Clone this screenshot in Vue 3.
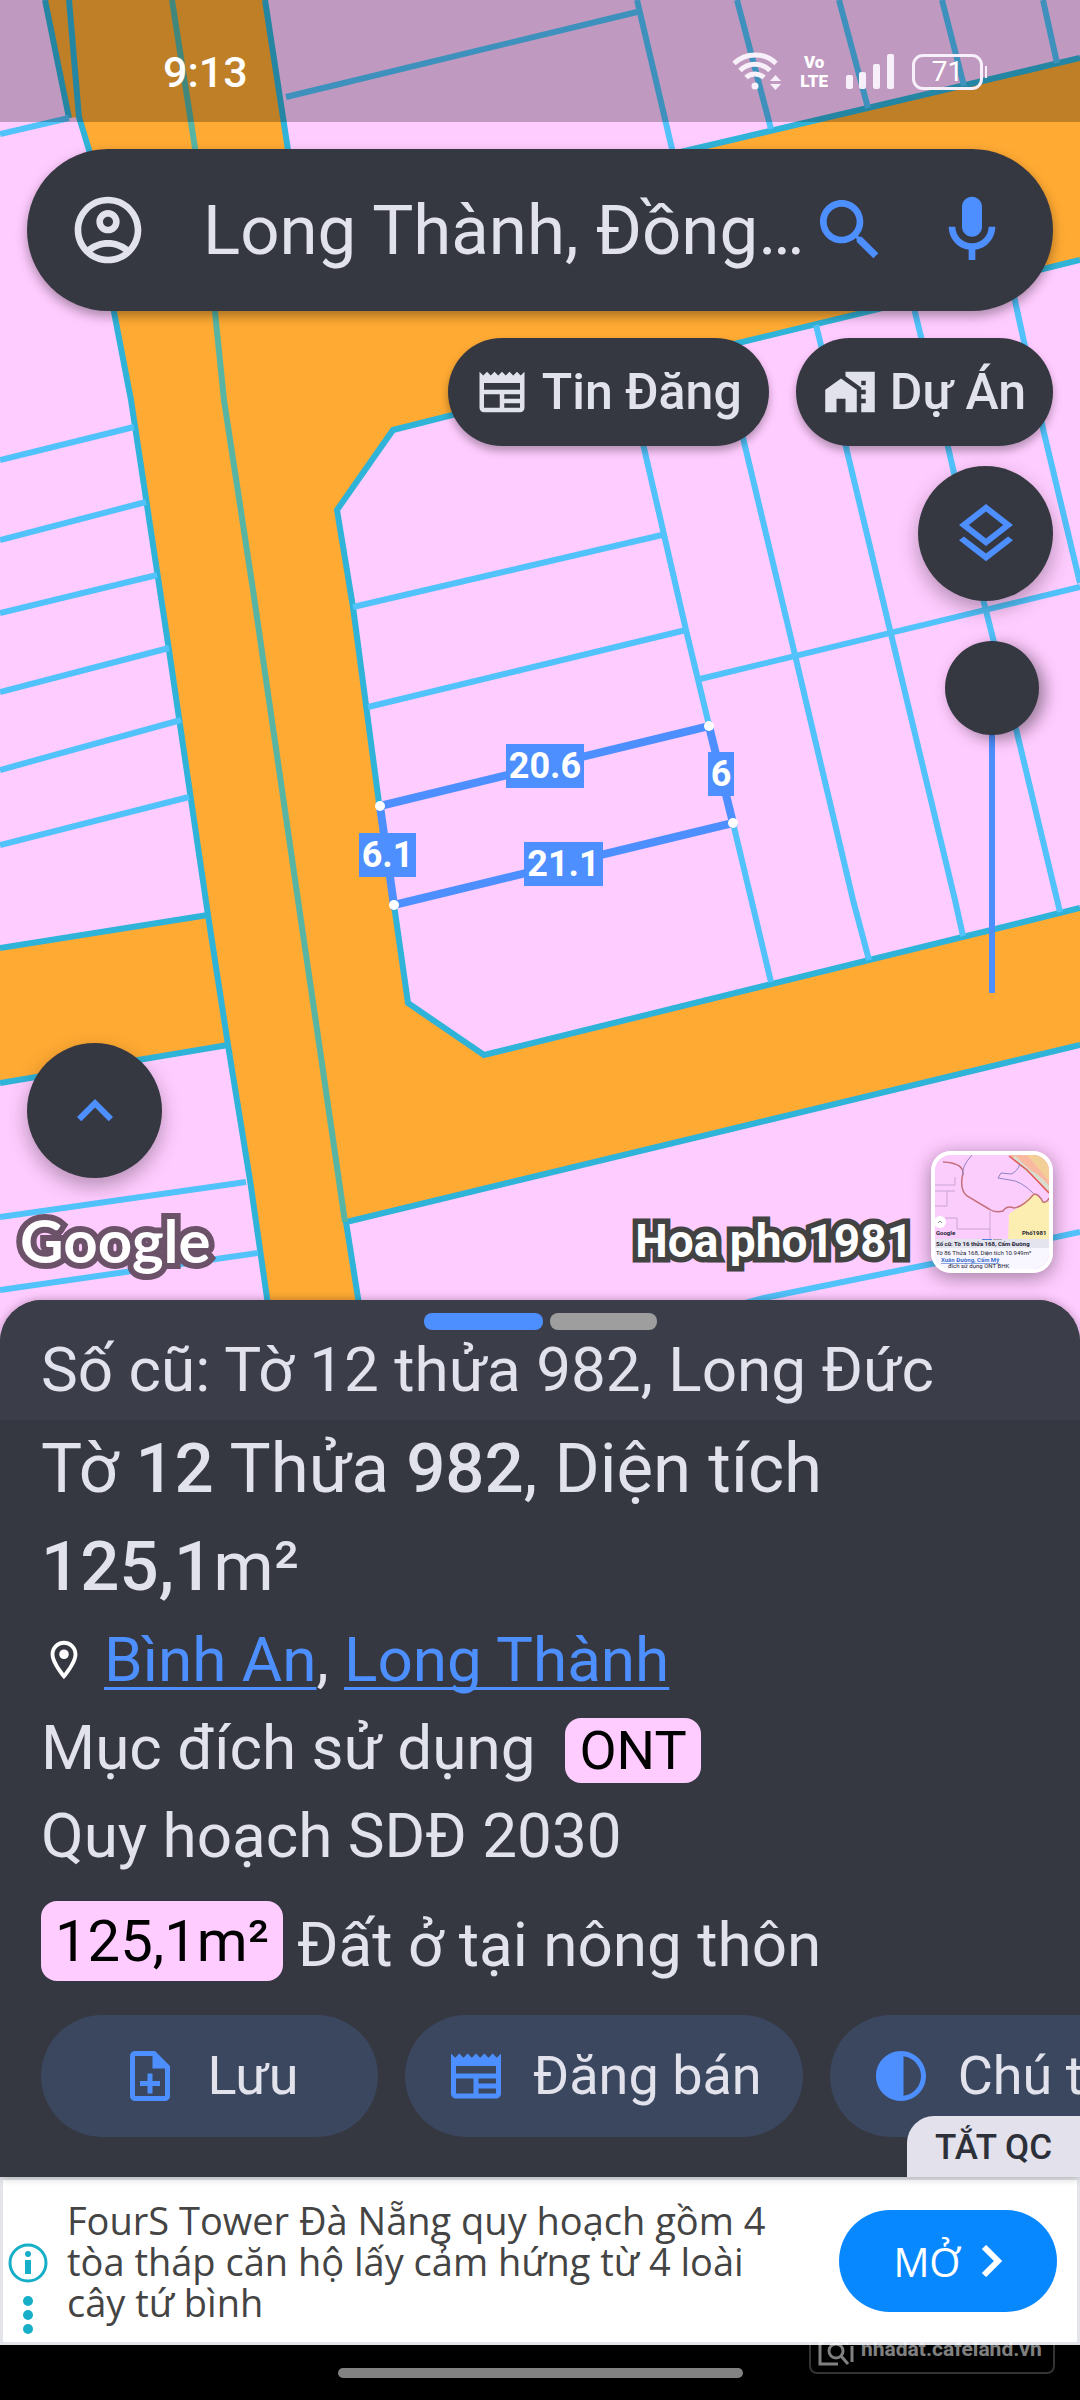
<template>
  <div class="app">
    <section class="map">
      <svg class="map-canvas" viewBox="0 0 1080 1345" preserveAspectRatio="xMidYMid slice" aria-hidden="true">
        <rect width="1080" height="1345" fill="#ffccff" />
        <path class="road" :d="road" />
        <g class="edge">
          <path v-for="d in edges" :key="d" :d="d" />
        </g>
        <g class="plot">
          <path v-for="d in plots" :key="d" :d="d" />
        </g>
        <path class="center-line" d="M172 0 195 148 215 312 224 400 253 590 298 900 320 1050 345 1222" />

        <path class="selected" d="M380 806 709 726 733 823 394 905Z" />
        <circle v-for="p in corners" :key="p[0]" :cx="p[0]" :cy="p[1]" r="5" fill="#fff" />
        <g v-for="m in measures" :key="m.text" class="measure">
          <rect :x="m.x" :y="m.y" :width="m.w" height="44" />
          <text :x="m.x + m.w / 2" :y="m.y + 34">{{ m.text }}</text>
        </g>
      </svg>

      <header class="status-bar">
        <span class="clock">9:13</span>
        <div class="status-icons">
          <svg width="50" height="40" viewBox="0 0 50 40" fill="none" stroke="#f7effa" stroke-width="5">
            <path d="M2 11.500a30 30 0 0 1 42 0M8 18.500a21 21 0 0 1 30 0M14 25.500a13 13 0 0 1 18 0" />
            <circle cx="23" cy="34" r="3.500" fill="#f7effa" stroke="none" />
            <path d="M38 29l5.500-6 5.500 6zM38 32l5.500 6 5.500-6z" fill="#f7effa" stroke="none" />
          </svg>
          <span class="volte"><span>Vo</span><span>LTE</span></span>
          <svg width="48" height="36" viewBox="0 0 48 36" fill="#f7effa">
            <rect x="0" y="21" width="7" height="14" rx="2" />
            <rect x="13" y="18" width="7" height="17" rx="2" />
            <rect x="27" y="10" width="7" height="25" rx="2" />
            <rect x="41" y="0" width="7" height="35" rx="2" />
          </svg>
          <span class="battery">71</span>
        </div>
      </header>

      <form class="search" @submit.prevent>
        <button type="button" class="icon-btn" aria-label="Tài khoản">
          <svg class="icon-lg" viewBox="0 0 24 24"><path :d="icons.account" /></svg>
        </button>
        <input v-model="query" type="text" aria-label="Tìm kiếm" />
        <button type="submit" class="icon-btn accent" aria-label="Tìm">
          <svg class="icon-lg" viewBox="0 0 24 24"><path :d="icons.search" /></svg>
        </button>
        <button type="button" class="icon-btn accent mic" aria-label="Giọng nói">
          <svg class="icon-lg" viewBox="0 0 24 24"><path :d="icons.mic" /></svg>
        </button>
      </form>

      <nav class="chips">
        <button type="button" class="chip">
          <svg viewBox="0 0 24 24"><path :d="icons.news" /></svg>Tin Đăng
        </button>
        <button type="button" class="chip">
          <svg viewBox="0 0 24 24"><path :d="icons.homeWork" /></svg>Dự Án
        </button>
      </nav>

      <div class="tools">
        <button type="button" class="fab" aria-label="Lớp bản đồ">
          <svg viewBox="0 0 24 24"><path :d="icons.layers" /></svg>
        </button>
        <input v-model="opacity" class="opacity" type="range" min="0" max="100" aria-label="Độ mờ" />
      </div>

      <footer class="map-footer">
        <div class="map-left">
          <button type="button" class="fab" aria-label="Mở rộng">
            <svg viewBox="0 0 24 24"><path :d="icons.expandLess" /></svg>
          </button>
          <span class="google">Google</span>
        </div>
        <div class="map-right">
          <span class="user-name">Hoa pho1981</span>
          <button type="button" class="preview" aria-label="Ảnh xem trước">
            <svg viewBox="0 0 114 114" preserveAspectRatio="xMidYMid slice">
              <rect width="114" height="114" fill="#fbcdfc" />
              <path d="M74 59 84 52 93 43 99 38 108 46 114 47V86H73Z" fill="#fbeeb0" />
              <path d="M74 0H114V37L100 24Z" fill="#f8b9a0" />
              <path d="M92 0H114V26Z" fill="#f3cf98" />
              <path d="M79 2Q90 14 98 19T114 34" fill="none" stroke="#d8ddd0" stroke-width="4" />
              <g fill="none" stroke="#c4707c" stroke-width="1.500">
                <path d="M8 7Q28 8 28 18 24 34 32 41L54 54Q60 58 68 56 72 50 79 53 88 52 99 39 104 39 108 47 112 48 114 43" />
                <path d="M74 1 92 15 114 38" stroke="#e05555" />
              </g>
              <g fill="none" stroke="#8f83c4">
                <path d="M37 0Q26 12 28 20M85 9Q82 17 76 19L66 18 63 23 75 25Q86 26 98 38" />
                <path d="M0 30H20V22M0 36H12V51H0M12 36H20M55 56V86M22 63V74H55M10 63H22" stroke="#c8a4d4" />
              </g>
              <circle cx="5" cy="67" r="6" fill="#fff" />
              <path d="M3 68 5 66 7 68" fill="none" stroke="#888" />
              <text x="1" y="80" class="tiny bold">Google</text>
              <text x="87" y="80" class="tiny bold">Phố1981</text>
              <rect y="84" width="114" height="9" fill="#e4e4ef" />
              <rect y="93" width="114" height="21" fill="#f8f6ff" />
              <rect x="47" y="84" width="10" height="1" fill="#4a7fe0" />
              <rect x="58" y="84" width="9" height="1" fill="#aaa" />
              <text x="1" y="91" class="tiny bold">Số cũ: Tờ 16 thửa 168, Cẩm Đường</text>
              <text x="1" y="100" class="tiny">Tờ 86 Thửa 168, Diện tích 10.949m²</text>
              <text x="6" y="107" class="tiny link">Xuân Đường, Cẩm Mỹ</text>
              <text x="13" y="113" class="tiny">đích sử dụng ONT BHK</text>
            </svg>
          </button>
        </div>
      </footer>
    </section>

    <main class="sheet">
      <header class="sheet-header">
        <div class="pager"><i class="active"></i><i></i></div>
        <p>Số cũ: Tờ 12 thửa 982, Long Đức</p>
      </header>
      <div class="sheet-body">
        <h1>Tờ <b>12</b> Thửa <b>982</b>, Diện tích <b>125,1</b>m²</h1>
        <p class="place">
          <svg viewBox="0 0 24 24"><path :d="icons.pin" /></svg>
          <span><a href="#">Bình An</a>, <a href="#">Long Thành</a></span>
        </p>
        <p class="usage">Mục đích sử dụng <span class="tag">ONT</span></p>
        <p>Quy hoạch SDĐ 2030</p>
        <p class="zone"><span class="tag area">125,1m²</span>Đất ở tại nông thôn</p>
      </div>
      <div class="actions">
        <button v-for="a in actions" :key="a.label" type="button">
          <svg viewBox="0 0 24 24"><path :d="icons[a.icon]" /></svg>{{ a.label }}
        </button>
      </div>
      <button type="button" class="close-ad">TẮT QC</button>
    </main>

    <aside class="ad">
      <div class="ad-marks">
        <svg width="40" height="40" viewBox="0 0 40 40">
          <circle cx="20" cy="20" r="18" fill="none" stroke="#17aec8" stroke-width="3" />
          <circle cx="20" cy="11" r="3" fill="#17aec8" />
          <path d="M17 17h6v14h-6z" fill="#17aec8" />
        </svg>
        <svg width="10" height="38" viewBox="0 0 10 38" fill="#17aec8">
          <circle cx="5" cy="5" r="5" /><circle cx="5" cy="19" r="5" /><circle cx="5" cy="33" r="5" />
        </svg>
      </div>
      <p>FourS Tower Đà Nẵng quy hoạch gồm 4 tòa tháp căn hộ lấy cảm hứng từ 4 loài cây tứ bình</p>
      <button type="button">
        MỞ
        <svg width="22" height="32" viewBox="0 0 22 32"><path d="M3 2 17 16 3 30" fill="none" stroke="#fff" stroke-width="6" /></svg>
      </button>
    </aside>

    <footer class="nav-bar">
      <i class="handle"></i>
      <div class="watermark">
        <svg width="36" height="34" viewBox="0 0 36 34" fill="none" stroke="#fff" stroke-width="3">
          <path d="M16 0 2 12V32H20M16 0 30 12M34 14V30" /><circle cx="18" cy="19" r="7" /><path d="M23 24 30 32" />
        </svg>
        nhadat.cafeland.vn
      </div>
    </footer>
  </div>
</template>

<script setup>
import { ref } from 'vue'

const query = ref('Long Thành, Đồng…')
const opacity = ref(100)

const actions = [
  { label: 'Lưu', icon: 'noteAdd' },
  { label: 'Đăng bán', icon: 'news' },
  { label: 'Chú thích', icon: 'contrast' }
]

// Orange road surface
const road = 'M45 0H265L288 150 330 235 689 150 1080 58V260L730 345 393 430 337 510 353 607 394 905 408 1003 484 1055 1080 908V1045L346 1222 358 1298 366 1345H276L267 1298 228 1045 0 1083V948L208 915 169 650 131 400 114 312 89 150 79 117 69 118Z'

const edges = [
  'M45 0 69 118',
  'M69 0 79 117 89 150 114 312 131 400 169 650 208 915 228 1045 250 1180 267 1298 276 1345',
  'M265 0 288 150 330 235 689 150 1080 58',
  'M1080 260 730 345 393 430 337 510 353 607 379 803 394 905 408 1003 484 1055 1080 908',
  'M1080 1045 346 1222 358 1298 366 1345',
  'M0 948 208 915',
  'M0 1083 228 1045'
]

// Parcel boundaries
const plots = [
  'M0 134 69 118',
  'M0 460 134 427',
  'M0 540 146 502',
  'M0 613 157 575',
  'M0 692 169 648',
  'M0 770 181 720',
  'M0 845 189 797',
  'M0 1217 246 1182',
  'M0 1290 258 1253',
  'M286 97 637 12',
  'M637 0 673 153',
  'M737 0 771 129',
  'M839 0 868 108',
  'M942 0 964 86',
  'M1043 0 1057 63',
  'M624 370 644 448 686 630 709 725 733 823 771 982',
  'M722 348 744 442 795 655 853 900 869 960',
  'M816 325 846 447 890 630 955 900 963 936',
  'M912 300 948 447 984 603 1017 733 1060 912',
  'M1010 278 1044 433 1080 583',
  'M700 679 1080 587',
  'M353 607 662 535',
  'M368 707 686 630',
  'M590 1345 764 1298 936 1263 1080 1232'
]

const corners = [[380, 806], [709, 726], [733, 823], [394, 905]]

const measures = [
  { text: '20.6', x: 506, y: 744, w: 78 },
  { text: '6', x: 708, y: 752, w: 26 },
  { text: '6.1', x: 359, y: 833, w: 57 },
  { text: '21.1', x: 524, y: 842, w: 79 }
]

const icons = {
  account: 'M12 2C6.480 2 2 6.480 2 12s4.480 10 10 10 10-4.480 10-10S17.520 2 12 2zM7.350 18.500C8.660 17.560 10.260 17 12 17s3.340.56 4.650 1.500c-1.310.94-2.910 1.500-4.650 1.500s-3.340-.56-4.650-1.500zm10.790-1.380C16.450 15.800 14.320 15 12 15s-4.450.8-6.140 2.120C4.700 15.730 4 13.950 4 12c0-4.420 3.580-8 8-8s8 3.580 8 8c0 1.950-.7 3.730-1.860 5.120zM12 6c-1.930 0-3.500 1.570-3.500 3.500S10.070 13 12 13s3.500-1.570 3.500-3.500S13.930 6 12 6zm0 5c-.83 0-1.500-.67-1.500-1.500S11.170 8 12 8s1.500.67 1.500 1.500S12.830 11 12 11z',
  search: 'M15.500 14h-.79l-.28-.27C15.410 12.590 16 11.110 16 9.500 16 5.910 13.090 3 9.500 3S3 5.910 3 9.500 5.910 16 9.500 16c1.610 0 3.090-.59 4.230-1.570l.27.28v.79l5 4.990L20.490 19l-4.990-5zm-6 0C7.010 14 5 11.990 5 9.500S7.010 5 9.500 5 14 7.010 14 9.500 11.990 14 9.500 14z',
  mic: 'M12 14c1.660 0 3-1.340 3-3V5c0-1.660-1.340-3-3-3S9 3.340 9 5v6c0 1.660 1.340 3 3 3zM17 11c0 2.760-2.240 5-5 5s-5-2.240-5-5H5c0 3.530 2.610 6.430 6 6.920V21h2v-3.080c3.390-.49 6-3.390 6-6.920h-2z',
  news: 'M22 3l-1.670 1.670L18.670 3 17 4.670 15.330 3l-1.660 1.670L12 3l-1.670 1.670L8.670 3 7 4.670 5.330 3 3.670 4.670 2 3v16c0 1.100.9 2 2 2h16c1.100 0 2-.9 2-2V3zM11 19H4v-6h7v6zm9 0h-7v-2h7v2zm0-4h-7v-2h7v2zm0-4H4V8h16v3z',
  homeWork: 'M1 11v10h5v-6h4v6h5V11L8 6zM10 3v1.970l7 5V11h2v2h-2v2h2v2h-2v4h6V3H10zm9 6h-2V7h2v2z',
  layers: 'M11.990 18.540l-7.370-5.730L3 14.070l9 7 9-7-1.630-1.270zM12 16l7.360-5.730L21 9l-9-7-9 7 1.630 1.270L12 16zm0-11.470L17.740 9 12 13.470 6.260 9 12 4.530z',
  expandLess: 'M12 8l-6 6 1.410 1.410L12 10.830l4.590 4.580L18 14z',
  pin: 'M12 2C8.130 2 5 5.130 5 9c0 5.250 7 13 7 13s7-7.750 7-13c0-3.870-3.130-7-7-7zM7 9c0-2.760 2.240-5 5-5s5 2.240 5 5c0 2.880-2.880 7.190-5 9.880C9.920 16.210 7 11.850 7 9zM12 6.500a2.500 2.500 0 1 0 0 5 2.500 2.500 0 0 0 0-5z',
  noteAdd: 'M14 2H6c-1.100 0-1.990.9-1.990 2L4 20c0 1.100.89 2 1.990 2H18c1.100 0 2-.9 2-2V8l-6-6zm4 18H6V4h7v5h5v11zM13 11h-2v3H8v2h3v3h2v-3h3v-2h-3z',
  contrast: 'M12 22c5.520 0 10-4.480 10-10S17.520 2 12 2 2 6.480 2 12s4.480 10 10 10zm1-17.930c3.940.49 7 3.850 7 7.930s-3.050 7.440-7 7.930V4.070z'
}
</script>

<style>
body {
  margin: 0;
  background: #000;
}
</style>

<style scoped>
.app {
  min-height: 100vh;
  display: flex;
  flex-direction: column;
  font-family: Roboto, "Noto Sans", sans-serif;
  color: #e2e2ec;
  overflow: hidden;
}

p, h1 {
  margin: 0;
  font-weight: 400;
}

button {
  padding: 0;
  border: 0;
  background: none;
  color: inherit;
  font: inherit;
  cursor: pointer;
}

svg {
  display: block;
  flex: none;
}

svg:not([fill]) {
  fill: currentColor;
}

/* Map */
.map {
  position: relative;
  flex: 1;
  display: flex;
  flex-direction: column;
}

.map > * {
  position: relative;
}

.map > .map-canvas {
  position: absolute;
  inset: 0;
  width: 100%;
  height: 100%;
}

.road {
  fill: #ffaa33;
}

.edge,
.plot,
.center-line {
  fill: none;
  stroke: #30b3d8;
  stroke-width: 6;
}

.plot {
  stroke: #52c2fb;
}

.center-line {
  stroke: #58b5a4;
}

.selected {
  fill: none;
  stroke: #4d8fff;
  stroke-width: 8;
}

.measure rect {
  fill: #4d8fff;
}

.measure text {
  fill: #fff;
  font-size: 36px;
  font-weight: 700;
  text-anchor: middle;
}

.status-bar {
  box-sizing: border-box;
  height: 122px;
  padding: 22px 97px 0 163px;
  display: flex;
  align-items: center;
  justify-content: space-between;
  background: rgba(0, 0, 0, 0.25);
  color: #fff;
}

.clock {
  font-size: 43px;
  font-weight: 500;
}

.status-icons {
  display: flex;
  align-items: center;
  gap: 18px;
}

.volte {
  display: flex;
  flex-direction: column;
  font-size: 17px;
  font-weight: 900;
  line-height: 19px;
  text-align: center;
}

.battery {
  box-sizing: border-box;
  position: relative;
  width: 71px;
  height: 36px;
  border: 3px solid #f7effa;
  border-radius: 11px;
  font-size: 28px;
  line-height: 30px;
  text-align: center;
}

.battery::after {
  content: "";
  position: absolute;
  right: -7px;
  top: 9px;
  width: 2px;
  height: 12px;
  background: #f7effa;
}

.search {
  box-sizing: border-box;
  height: 162px;
  margin: 27px 27px 0;
  padding: 0 41px;
  display: flex;
  align-items: center;
  border-radius: 81px;
  background: #363841;
  box-shadow: 0 5px 12px rgba(0, 0, 0, 0.35);
}

.search input {
  flex: 1;
  min-width: 0;
  height: 100px;
  margin-left: 55px;
  padding: 0;
  border: 0;
  outline: 0;
  background: none;
  color: inherit;
  font: inherit;
  font-size: 69px;
  text-overflow: ellipsis;
}

.icon-lg {
  width: 80px;
  height: 80px;
}

.accent {
  color: #4d8fff;
}

.mic {
  margin-left: 42px;
}

.chips {
  display: flex;
  justify-content: flex-end;
  gap: 27px;
  margin: 27px 27px 0;
}

.chip {
  height: 108px;
  padding: 0 27px;
  display: flex;
  align-items: center;
  gap: 13px;
  border-radius: 54px;
  background: #363841;
  box-shadow: 0 5px 8px rgba(0, 0, 0, 0.3);
  font-size: 50px;
  font-weight: 500;
}

.chip svg {
  width: 54px;
  height: 54px;
}

.fab {
  width: 135px;
  height: 135px;
  display: flex;
  align-items: center;
  justify-content: center;
  border-radius: 50%;
  background: #363841;
  color: #4d8fff;
  box-shadow: 0 8px 20px rgba(0, 0, 0, 0.3);
}

.fab svg {
  width: 72px;
  height: 72px;
}

.tools {
  display: flex;
  flex-direction: column;
  align-items: flex-end;
  gap: 40px;
  margin: 20px 27px 0;
}

.opacity {
  appearance: none;
  writing-mode: vertical-lr;
  direction: rtl;
  width: 94px;
  height: 352px;
  margin: 0 14px 0 0;
  background: linear-gradient(#4d8fff, #4d8fff) center / 6px 100% no-repeat;
}

.opacity::-webkit-slider-thumb {
  appearance: none;
  width: 94px;
  height: 94px;
  border-radius: 50%;
  background: #363841;
  box-shadow: 6px 4px 16px rgba(0, 0, 0, 0.4);
}

.map-footer {
  margin-top: auto;
  padding: 0 27px 72px 20px;
  display: flex;
  align-items: flex-end;
  justify-content: space-between;
}

.map-left {
  display: flex;
  flex-direction: column;
  gap: 29px;
}

.map-left .fab {
  margin-left: 7px;
}

.map-right {
  display: flex;
  align-items: flex-end;
  gap: 18px;
}

.google {
  font: 700 60px/66px Lato, sans-serif;
  color: #fff;
  -webkit-text-stroke: 12px #6b5268;
  paint-order: stroke fill;
}

.user-name {
  margin-bottom: 7px;
  font-size: 46px;
  font-weight: 700;
  line-height: 50px;
  color: #fff;
  -webkit-text-stroke: 11px #424242;
  paint-order: stroke fill;
}

.preview {
  width: 122px;
  height: 122px;
  border: 4px solid #fff;
  border-radius: 20px;
  overflow: hidden;
  box-shadow: 0 4px 20px rgba(0, 0, 0, 0.4);
}

.preview svg {
  width: 100%;
  height: 100%;
}

.tiny {
  font-size: 6px;
  fill: #223;
}

.tiny.bold {
  font-weight: 700;
}

.tiny.link {
  font-weight: 700;
  fill: #3a6fd0;
  text-decoration: underline;
}

/* Parcel sheet */
.sheet {
  position: relative;
  margin-top: -45px;
  padding-bottom: 40px;
  border-radius: 42px 42px 0 0;
  background: #363841;
  box-shadow: 0 0 10px rgba(0, 0, 0, 0.3);
  font-size: 62px;
  line-height: 88px;
}

.sheet-header {
  padding: 13px 41px 15px;
  border-radius: 42px 42px 0 0;
  background: #3b3d48;
  line-height: 70px;
}

.pager {
  display: flex;
  justify-content: center;
  gap: 7px;
  margin-bottom: 5px;
}

.pager i {
  width: 107px;
  height: 17px;
  border-radius: 8px;
  background: #9e9e9e;
}

.pager .active {
  width: 119px;
  background: #4d8fff;
}

.sheet-body {
  padding: 0 41px;
}

h1 {
  max-width: 900px;
  font-size: 69px;
  line-height: 98px;
}

b {
  font-weight: 500;
}

.place {
  display: flex;
  align-items: center;
  gap: 17px;
}

.place svg {
  width: 46px;
  height: 46px;
  color: #fff;
}

a {
  color: #4d8fff;
  text-decoration-thickness: 3px;
  text-underline-offset: 6px;
  text-decoration-skip-ink: none;
}

.usage {
  display: flex;
  align-items: baseline;
  gap: 30px;
}

.tag {
  padding: 0 14px;
  border-radius: 16px;
  background: #ffccff;
  color: #000;
  font-size: 54px;
  line-height: 65px;
}

.zone {
  display: flex;
  align-items: flex-start;
  gap: 14px;
  margin-top: 21px;
}

.area {
  font-size: 58px;
  line-height: 80px;
}

.actions {
  display: flex;
  gap: 27px;
  margin-top: 26px;
  padding-left: 41px;
  overflow: hidden;
}

.actions button {
  flex: none;
  min-width: 337px;
  height: 122px;
  padding: 0 41px;
  display: flex;
  align-items: center;
  justify-content: center;
  gap: 27px;
  border-radius: 61px;
  background: #3b475f;
  font-size: 54px;
  white-space: nowrap;
}

.actions svg {
  width: 60px;
  height: 60px;
  color: #4d8fff;
}

.close-ad {
  position: absolute;
  right: 0;
  bottom: 0;
  height: 61px;
  padding: 0 28px;
  border-radius: 27px 0 0 0;
  background: #e2e1ec;
  color: #2d3038;
  font-size: 35px;
  font-weight: 500;
  line-height: 64px;
}

/* Banner */
.ad {
  box-sizing: border-box;
  min-height: 168px;
  padding: 0 20px 0 5px;
  display: flex;
  align-items: center;
  border: 3px solid #e4e5ea;
  background: #fff;
  color: #444;
  font-family: "Open Sans", "Noto Sans", sans-serif;
}

.ad-marks {
  align-self: flex-end;
  display: flex;
  flex-direction: column;
  align-items: center;
  gap: 13px;
  margin-bottom: 8px;
}

.ad p {
  flex: 1;
  margin: 0 55px 0 19px;
  font-size: 38px;
  line-height: 41px;
}

.ad button {
  width: 218px;
  height: 102px;
  display: flex;
  align-items: center;
  justify-content: center;
  gap: 20px;
  border-radius: 51px;
  background: #0788ff;
  color: #fff;
  font-size: 40px;
}

.nav-bar {
  position: relative;
  height: 55px;
  display: flex;
  justify-content: center;
  align-items: center;
  background: #000;
}

.handle {
  width: 405px;
  height: 10px;
  border-radius: 5px;
  background: #828282;
}

.watermark {
  box-sizing: border-box;
  position: absolute;
  right: 25px;
  bottom: 26px;
  width: 246px;
  height: 50px;
  padding: 0 7px;
  display: flex;
  align-items: center;
  gap: 7px;
  border: 2px solid rgba(255, 255, 255, 0.4);
  border-radius: 8px;
  color: #fff;
  font-size: 21px;
  font-weight: 700;
  white-space: nowrap;
  opacity: 0.5;
}
</style>
